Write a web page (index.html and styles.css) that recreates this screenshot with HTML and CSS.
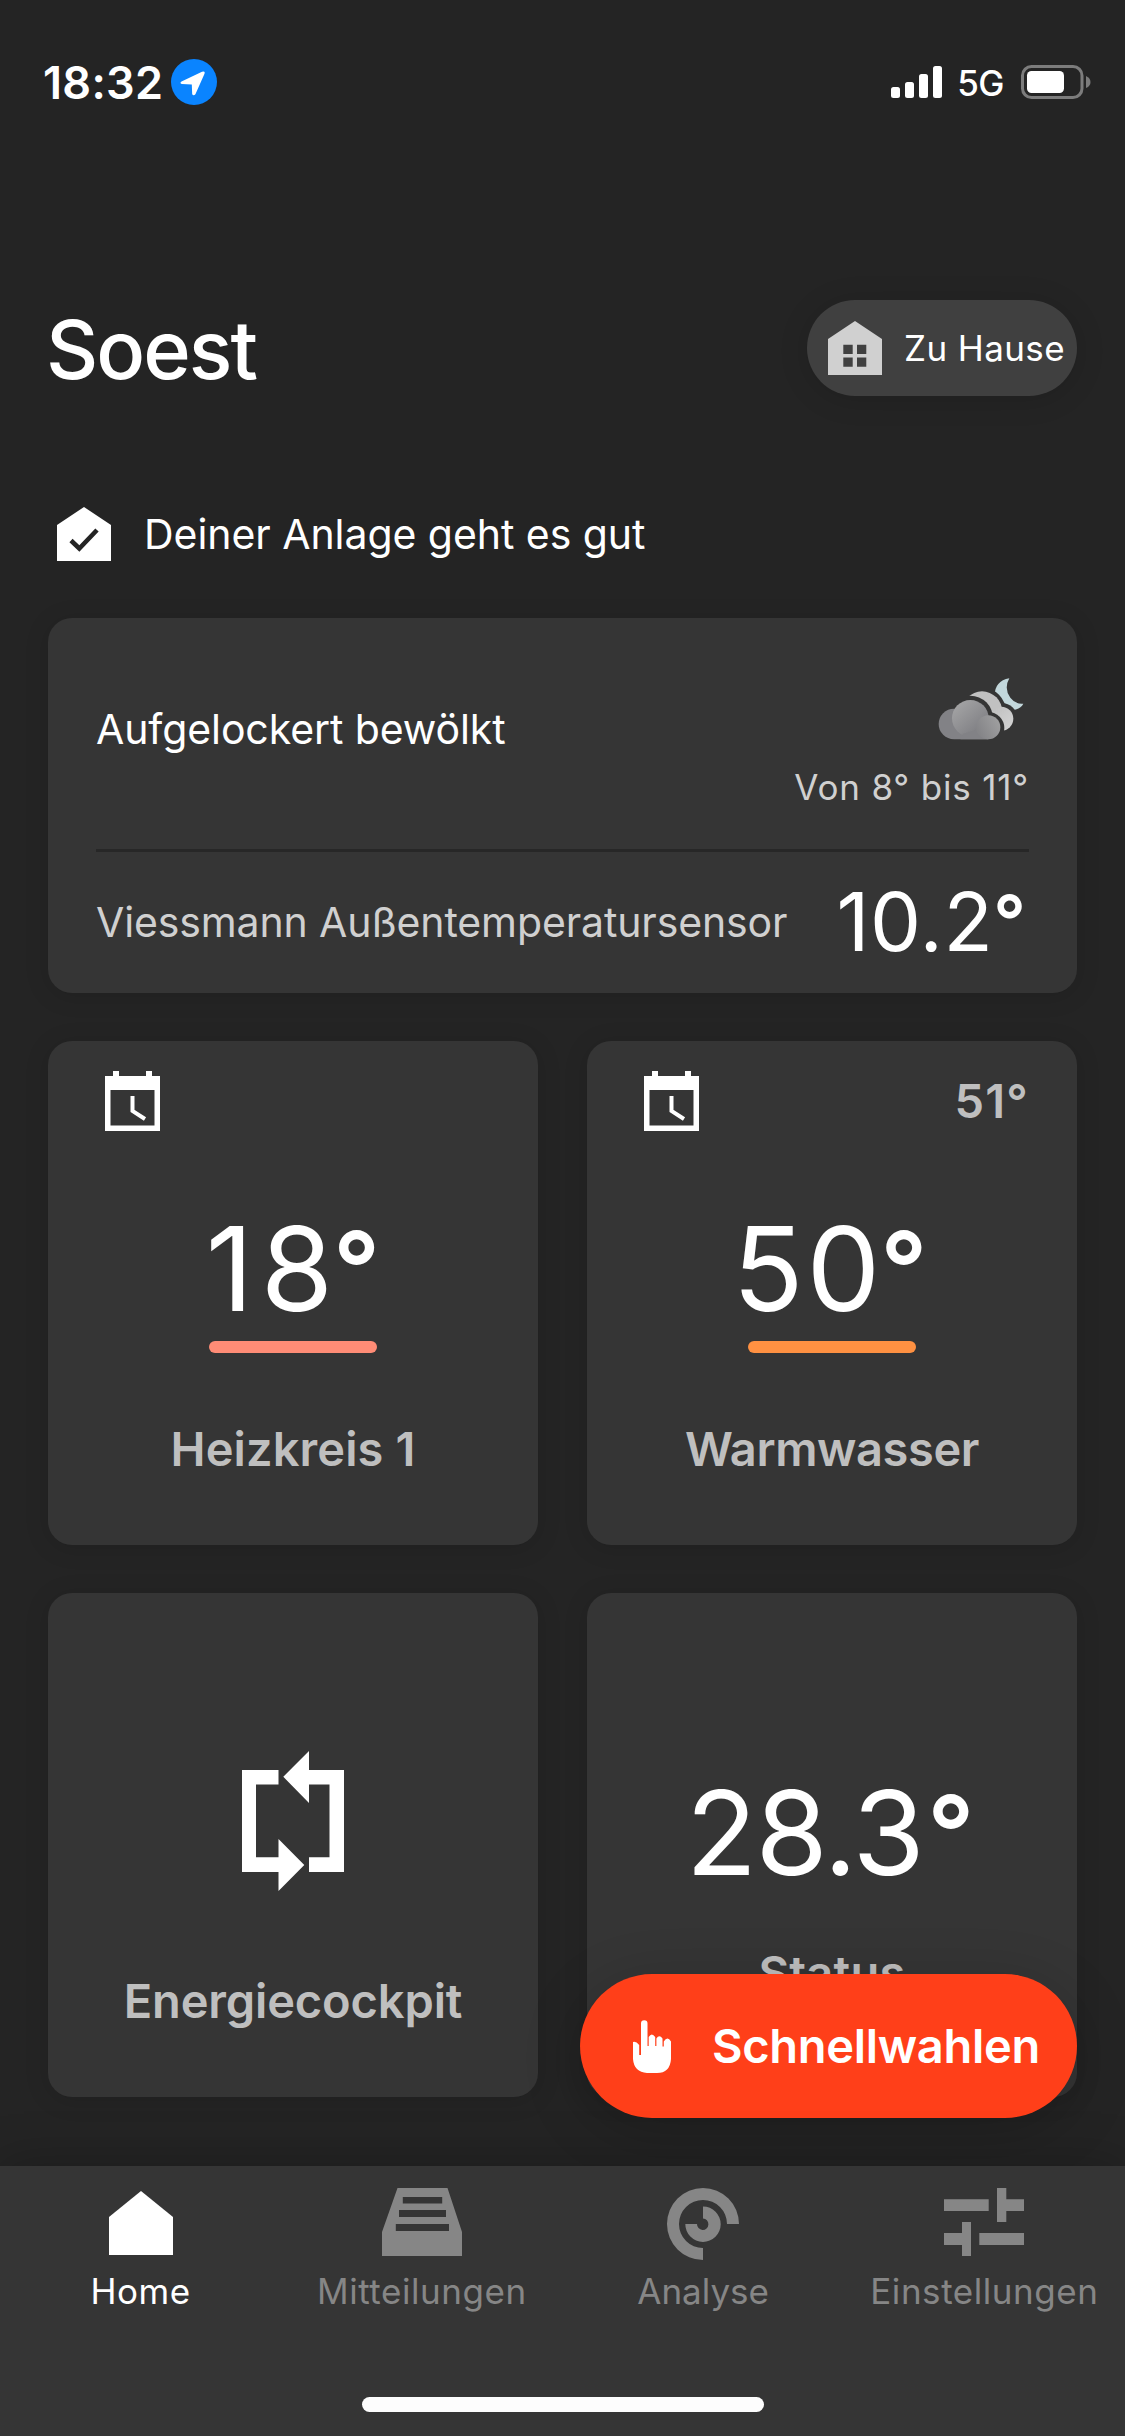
FILE: index.html
```html
<!DOCTYPE html>
<html lang="de">
<head>
<meta charset="utf-8">
<title>Soest</title>
<link rel="stylesheet" href="styles.css">
</head>
<body>
<div class="phone">
  <main class="screen">
    <div class="statusbar">
      <div class="statusbar-left">
        <span class="time">18:32</span>
        <svg class="location" width="46" height="46" viewBox="0 0 46 46"><circle cx="23" cy="23" r="23" fill="#0a84ff"/><path d="M10.500 22.600 L31 12.800 Q34.600 11.400 33.400 15 L24.400 35.200 Q22.600 37.400 21.200 35.200 L20.800 25.600 L10.800 25 Q8.300 24.400 10.500 22.600Z" fill="#fff"/></svg>
      </div>
      <div class="statusbar-right">
        <svg class="signal" width="51" height="32" viewBox="0 0 51 32" fill="#fff"><rect y="21" width="9" height="11" rx="2.500"/><rect x="14" y="16" width="9" height="16" rx="2.500"/><rect x="28" y="8" width="9" height="24" rx="2.500"/><rect x="42" width="9" height="32" rx="2.500"/></svg>
        <span class="network">5G</span>
        <svg class="battery" width="70" height="34" viewBox="0 0 70 34"><rect x="1.500" y="1.500" width="59.500" height="31" rx="9" fill="none" stroke="#7c7c7c" stroke-width="3"/><rect x="6" y="6" width="37" height="22" rx="4.500" fill="#fff"/><path d="M65 11 Q69.500 13 69.500 17 T65 23Z" fill="#7c7c7c"/></svg>
      </div>
    </div>

    <header class="header">
      <h1 class="title">Soest</h1>
      <div class="mode">
        <svg width="54" height="54" viewBox="0 0 54 54"><path fill="#d0d0d0" fill-rule="evenodd" d="M27 0 54 18V54H0V18ZM15.300 23.700V33H24.700V23.700ZM29 23.700V33H38.300V23.700ZM15.300 36.500V45.800H24.700V36.500ZM29 36.500V45.800H38.300V36.500Z"/></svg>
        <span>Zu Hause</span>
      </div>
    </header>

    <div class="health">
      <svg width="54" height="54" viewBox="0 0 54 54"><path fill="#fff" d="M27 0 54 18V54H0V18Z"/><path d="M14 33.500 22.300 41.500 40 23" fill="none" stroke="#242424" stroke-width="4.600"/></svg>
      <span>Deiner Anlage geht es gut</span>
    </div>

    <section class="card weather">
      <div class="weather-now">
        <span class="weather-text">Aufgelockert bewölkt</span>
        <div class="forecast">
          <svg class="weather-icon" width="88" height="64" viewBox="530 200 264 192">
            <defs>
              <linearGradient id="puff" x1="0.100" y1="0.100" x2="0.700" y2="0.800"><stop offset="0" stop-color="#a4a4a5"/><stop offset="1" stop-color="#828286"/></linearGradient>
              <linearGradient id="small" x1="0.100" y1="0.700" x2="0.900" y2="0.300"><stop offset="0" stop-color="#858588"/><stop offset="1" stop-color="#9d9d9e"/></linearGradient>
              <linearGradient id="light" x1="0" y1="0" x2="1" y2="1"><stop offset="0" stop-color="#bdbdbd"/><stop offset="1" stop-color="#d6d6d6"/></linearGradient>
              <mask id="cut-front" maskUnits="userSpaceOnUse" x="530" y="200" width="264" height="192"><path fill="#fff" d="M530 200h264v192H530z"/><circle cx="630" cy="324" r="68"/><circle cx="684" cy="353" r="48"/><path d="M580 310h104v90H580z"/></mask>
              <mask id="cut-mid" maskUnits="userSpaceOnUse" x="530" y="200" width="264" height="192"><path fill="#fff" d="M530 200h264v192H530z"/><circle cx="665" cy="304" r="72"/><circle cx="724" cy="325" r="47"/></mask>
            </defs>
            <path mask="url(#cut-mid)" fill="#c2d7db" d="M747 204Q703 212 703 256Q716 302 764 298Q782 294 789 280Q765 282 750 262Q730 234 747 204Z"/>
            <g mask="url(#cut-front)"><circle cx="665" cy="304" r="61" fill="#c1c1c1"/><circle cx="723" cy="325" r="36" fill="url(#light)"/></g>
            <path fill="#828286" d="M581 295A46 46 0 0 0 581 387H684V330L630 300Z"/>
            <circle cx="630" cy="324" r="55" fill="url(#puff)"/>
            <path fill="#828286" d="M608 370 675 350 684 387H600Z"/>
            <circle cx="684" cy="351" r="36" fill="url(#small)"/>
          </svg>
          <span class="range">Von 8° bis 11°</span>
        </div>
      </div>
      <div class="sensor">
        <span class="sensor-name">Viessmann Außentemperatursensor</span>
        <span class="sensor-value">10.2<span class="deg">°</span></span>
      </div>
    </section>

    <section class="tiles">
      <article class="card tile">
        <div class="tile-top">
          <svg class="calendar" width="55" height="60" viewBox="0 0 55 60"><path fill="#fff" fill-rule="evenodd" d="M8 0H14V5H41V0H47V5H55V60H0V5H8ZM5.500 19V54.500H49.500V19Z"/><path d="M27.500 25V40L40 48" fill="none" stroke="#fff" stroke-width="4"/></svg>
        </div>
        <div class="value value-18"><span class="lead">1</span>8<span class="deg">°</span></div>
        <div class="bar bar-heating"></div>
        <div class="label label-heating">Heizkreis 1</div>
      </article>
      <article class="card tile">
        <div class="tile-top">
          <svg class="calendar" width="55" height="60" viewBox="0 0 55 60"><path fill="#fff" fill-rule="evenodd" d="M8 0H14V5H41V0H47V5H55V60H0V5H8ZM5.500 19V54.500H49.500V19Z"/><path d="M27.500 25V40L40 48" fill="none" stroke="#fff" stroke-width="4"/></svg>
          <span class="current">51°</span>
        </div>
        <div class="value value-50"><span class="lead">5</span>0<span class="deg">°</span></div>
        <div class="bar bar-water"></div>
        <div class="label label-water">Warmwasser</div>
      </article>
      <article class="card tile">
        <div class="tile-top"></div>
        <svg class="energy" width="102" height="140" viewBox="0 0 102 140" fill="#fff"><path d="M0 19H36.500V33.500H14V106.300H36.500V88L62.300 114 36.500 140V121H0Z"/><path d="M102 121H67V106.300H87.500V33.500H67V52L41.300 25.800 67 0V19H102Z"/></svg>
        <div class="label label-energy">Energiecockpit</div>
      </article>
      <article class="card tile tile-status">
        <div class="tile-top"></div>
        <div class="value value-28">28.3<span class="deg">°</span></div>
        <div class="label label-status">Status</div>
      </article>
    </section>

    <button class="fab">
      <svg width="38" height="53" viewBox="0 0 38 53" fill="#fff"><path d="M0 22Q3 21 6.200 25V35H8V3.500A3.200 3.200 0 0 1 14.500 3.500V26H15.700V17Q18.800 12 22.200 17V26H23.400V18.500Q26.300 14 29.500 18.500V26.500H30.800V21.500Q34.500 15.500 38 21.500V39Q37 53 24 53H14Q1 52 0 39Z"/></svg>
      <span class="fab-text">Schnellwahlen</span>
    </button>
  </main>

  <nav class="nav">
    <div class="tabs">
      <a class="tab active">
        <svg width="80" height="72" viewBox="0 0 80 72" fill="currentColor"><path d="M40 3 72 29V67H8V29Z"/></svg>
        <span>Home</span>
      </a>
      <a class="tab">
        <svg width="80" height="72" viewBox="0 0 80 72" fill="currentColor"><path fill-rule="evenodd" d="M15.500 0H65.500L80 44V68H0V44ZM20.800 9V15.600H60.200V9ZM17 22V29H64V22ZM13.800 36V43H67V36Z"/></svg>
        <span>Mitteilungen</span>
      </a>
      <a class="tab tab-analyse">
        <svg width="80" height="72" viewBox="0 0 80 72" fill="currentColor"><path d="M40 72A36 36 0 1 1 76 36H64A24 24 0 1 0 40 60Z"/><path d="M40 18.500A17.700 17.700 0 1 1 22.300 36H34A5.700 5.700 0 1 0 40 30.500Z"/></svg>
        <span>Analyse</span>
      </a>
      <a class="tab">
        <svg width="80" height="72" viewBox="0 0 80 72" fill="currentColor"><path d="M0 11.300H44.700V23H0ZM53 0H62.300V11.300H80V23H62.300V34H53ZM0 45H18V34H27V68H18V57H0ZM35.300 45H80V57H35.300Z"/></svg>
        <span>Einstellungen</span>
      </a>
    </div>
    <div class="home-indicator"></div>
  </nav>
</div>
</body>
</html>
```
FILE: styles.css
```css
* { box-sizing: border-box; }

body {
  margin: 0;
  background: #242424;
  color: #fff;
  font-family: Inter, "Liberation Sans", sans-serif;
}

svg { display: block; flex: none; }

.phone {
  width: 1125px;
  height: 2436px;
  display: flex;
  flex-direction: column;
  overflow: hidden;
}

.screen {
  position: relative;
  height: 2166px;
  padding: 0 48px;
  overflow: hidden;
  white-space: nowrap;
}

/* Status bar */
.statusbar {
  display: flex;
  justify-content: space-between;
  align-items: center;
  height: 164px;
  margin: 0 -14px 0 -5px;
}
.statusbar-left, .statusbar-right { display: flex; align-items: center; }
.time {
  width: 120px;
  font-size: 45px;
  font-weight: 600;
  letter-spacing: 0.3px;
}
.location { margin-left: 8px; }
.network {
  margin: 2px 17px 0 15px;
  font-size: 35px;
  font-weight: 500;
  letter-spacing: -0.5px;
}

/* Header */
.header {
  display: flex;
  justify-content: space-between;
  align-items: center;
  height: 96px;
  margin-top: 136px;
}
.title {
  margin: 3px 0 0 -2px;
  font-size: 81px;
  font-weight: 550;
  line-height: 98px;
  letter-spacing: -2px;
}
.mode {
  display: flex;
  align-items: center;
  gap: 22px;
  width: 270px;
  height: 96px;
  padding-left: 21px;
  border-radius: 48px;
  background: #404040;
  box-shadow: 0 3px 30px rgba(0, 0, 0, 0.14);
  font-size: 35px;
  letter-spacing: 0.4px;
}

.health {
  display: flex;
  align-items: center;
  gap: 33px;
  height: 54px;
  margin: 111px 0 57px 9px;
  font-size: 41px;
  letter-spacing: -0.05px;
}

/* Cards */
.card {
  border-radius: 24px;
  background: #353535;
  box-shadow: 0 3px 24px rgba(0, 0, 0, 0.13);
}

.weather {
  height: 375px;
  padding: 0 48px;
}
.weather-now {
  display: flex;
  justify-content: space-between;
  height: 234px;
  border-bottom: 3px solid #272727;
}
.weather-text {
  padding-top: 81px;
  font-size: 41px;
  line-height: 60px;
  letter-spacing: -0.1px;
}
.forecast {
  display: flex;
  flex-direction: column;
  align-items: flex-end;
  padding-top: 59px;
}
.weather-icon { margin-right: 4px; }
.range {
  margin-top: 25px;
  font-size: 35px;
  line-height: 42px;
  letter-spacing: 0.8px;
  color: #d0d0d0;
}
.sensor {
  display: flex;
  justify-content: space-between;
  align-items: center;
  height: 139px;
}
.sensor-name {
  font-size: 41px;
  letter-spacing: -0.12px;
  color: #d0d0d0;
}
.sensor-value {
  margin-right: 3px;
  font-size: 81px;
  line-height: 98px;
  letter-spacing: 0.56px;
}
.deg {
  display: inline-block;
  font-size: 0.88em;
  font-weight: 600;
  line-height: 0;
  letter-spacing: 0;
  vertical-align: 0.06em;
}

/* Tiles */
.tiles {
  display: grid;
  grid-template-columns: 490px 490px;
  justify-content: space-between;
  row-gap: 48px;
  margin-top: 48px;
}
.tile {
  display: flex;
  flex-direction: column;
  align-items: center;
  height: 504px;
  padding: 0 48px;
}
.tile-top {
  display: flex;
  justify-content: space-between;
  align-self: stretch;
  height: 158px;
  padding: 30px 0 0 9px;
}
.tile-status .tile-top { height: 170px; }
.calendar { margin-left: -0.5px; }
.current {
  font-size: 47px;
  font-weight: 600;
  line-height: 60px;
  letter-spacing: 1.2px;
  color: #bfbfbf;
}
.value {
  font-size: 117px;
  line-height: 139px;
}
.value-18 .lead { letter-spacing: 7.4px; }
.value-50 { padding-right: 4px; }
.value-50 .lead { letter-spacing: 2.9px; }
.value-28 { padding-right: 4px; letter-spacing: -1.6px; }
.value-28 .deg { margin-left: 4px; }
.bar {
  width: 168px;
  height: 12px;
  margin-top: 3px;
  border-radius: 6px;
}
.bar-heating { background: #ff8c76; }
.bar-water { background: #ff9142; }
.label {
  margin-top: 66px;
  font-size: 47px;
  font-weight: 600;
  line-height: 60px;
  color: #bfbfbf;
}
.label-heating { letter-spacing: 0.1px; }
.label-water { letter-spacing: -0.4px; }
.label-energy { margin-top: 80px; letter-spacing: -0.14px; }
.label-status { margin-top: 41px; letter-spacing: 0.25px; }

/* Floating action, above the tiles */
.fab {
  position: absolute;
  right: 48px;
  bottom: 48px;
  display: flex;
  align-items: center;
  gap: 41px;
  width: 497px;
  height: 144px;
  padding: 0 0 0 53px;
  border: 0;
  border-radius: 72px;
  background: #ff3f19;
  box-shadow: 0 12px 60px rgba(0, 0, 0, 0.2);
  color: #fff;
  font: 600 47px Inter, "Liberation Sans", sans-serif;
  letter-spacing: -0.3px;
}
.fab-text { margin-bottom: 2px; }

/* Bottom navigation */
.nav {
  position: relative;
  display: flex;
  flex-direction: column;
  align-items: center;
  height: 270px;
  background: #353535;
  box-shadow: 0 0 48px rgba(0, 0, 0, 0.25);
}
.tabs {
  display: grid;
  grid-template-columns: repeat(4, 1fr);
  width: 100%;
  height: 231px;
  padding-top: 22px;
}
.tab {
  display: flex;
  flex-direction: column;
  align-items: center;
  gap: 10px;
  color: #868686;
  font-size: 35px;
  line-height: 42px;
  letter-spacing: 0.55px;
}
.tab-analyse { letter-spacing: 0; }
.active { color: #fff; }
.home-indicator {
  width: 402px;
  height: 15px;
  border-radius: 8px;
  background: #fdfdfd;
}
```
